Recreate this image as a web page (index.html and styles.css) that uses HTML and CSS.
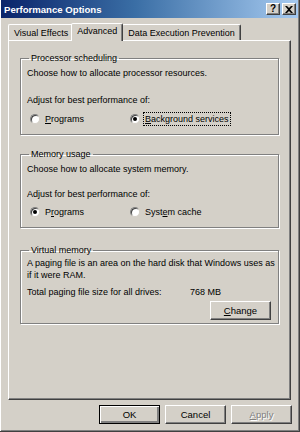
FILE: index.html
```html
<!DOCTYPE html>
<html lang="en">
<head>
  <meta charset="UTF-8">
  <title>Performance Options</title>
  <link rel="stylesheet" href="styles.css">
</head>
<body>

<div class="window">
  <div class="titlebar">
    <span class="title">Performance Options</span>
    <span class="caption-btns">
      <span class="cbtn">?</span>
      <span class="cbtn">
        <svg width="8" height="7" viewBox="0 0 8 7"><path d="M0 0h2l2 2 2-2h2L5 3.5 8 7H6L4 5 2 7H0l3-3.5z" fill="#000"/></svg>
      </span>
    </span>
  </div>

  <div class="tabs">
    <span class="tab">Visual Effects</span>
    <span class="tab active">Advanced</span>
    <span class="tab">Data Execution Prevention</span>
  </div>

  <div class="panel">
    <fieldset class="group group-cpu">
      <legend>Processor scheduling</legend>
      <p>Choose how to allocate processor resources.</p>
      <p class="adjust">Adjust for best performance of:</p>
      <div class="radios">
        <label class="radio"><span class="dot"></span><u>P</u>rograms</label>
        <label class="radio checked"><span class="dot"></span><span class="focus"><u>B</u>ackground services</span></label>
      </div>
    </fieldset>

    <fieldset class="group group-mem">
      <legend>Memory usage</legend>
      <p>Choose how to allocate system memory.</p>
      <p class="adjust">Adjust for best performance of:</p>
      <div class="radios">
        <label class="radio checked"><span class="dot"></span>P<u>r</u>ograms</label>
        <label class="radio"><span class="dot"></span>Syst<u>e</u>m cache</label>
      </div>
    </fieldset>

    <fieldset class="group group-vm">
      <legend>Virtual memory</legend>
      <p>A paging file is an area on the hard disk that Windows uses as if it were RAM.</p>
      <div class="total">
        <span class="total-label">Total paging file size for all drives:</span>
        <span>768 MB</span>
      </div>
      <div class="change-row">
        <button class="btn change"><u>C</u>hange</button>
      </div>
    </fieldset>
  </div>

  <div class="footer">
    <button class="btn default">OK</button>
    <button class="btn">Cancel</button>
    <button class="btn disabled"><u>A</u>pply</button>
  </div>
</div>

</body>
</html>
```

FILE: styles.css
```css
body {
  margin: 0;
  background: #d4d0c8;
  font-family: Tahoma, "Liberation Sans", Arial, sans-serif;
  font-size: 9px;
  color: #000;
}
.window {
  width: 300px;
  height: 432px;
  box-sizing: border-box;
  padding: 0 2px 2px 2px;
  border-right: 1px solid #404040;
  border-bottom: 1px solid #404040;
  box-shadow: inset 1px 0 0 #fff, inset -1px -1px 0 #808080;
  display: flex;
  flex-direction: column;
}
.titlebar {
  height: 18px;
  margin: 0 -1px;
  background: linear-gradient(to right, #0a246a, #3a6ea5 45%, #a6caf0);
  display: flex;
  align-items: center;
  justify-content: space-between;
  padding: 0 2px 0 3px;
}
.title {
  color: #fff;
  font-weight: bold;
  font-size: 9.6px;
}
.caption-btns {
  display: flex;
  gap: 2px;
}
.cbtn {
  width: 14px;
  height: 12px;
  box-sizing: border-box;
  background: #d4d0c8;
  border: 1px solid;
  border-color: #fff #404040 #404040 #fff;
  box-shadow: inset -1px -1px 0 #808080;
  display: flex;
  align-items: center;
  justify-content: center;
  font-weight: bold;
  font-size: 10px;
  line-height: 1;
}
.tabs {
  display: flex;
  align-items: flex-end;
  height: 18px;
  margin-top: 4px;
  padding-left: 6px;
}
.tab {
  height: 15px;
  padding: 0 5px;
  border: 1px solid;
  border-bottom: none;
  border-color: #fff #404040 transparent #fff;
  border-radius: 2px 2px 0 0;
  box-shadow: inset -1px 0 0 #808080;
  line-height: 16px;
  margin-right: -1px;
}
.tab.active {
  height: 17px;
  line-height: 15px;
  padding: 0 5px;
  margin: 0 -1px -1px -2px;
  position: relative;
  z-index: 1;
  background: #d4d0c8;
}
.panel {
  margin: 0 6px;
  height: 360px;
  box-sizing: border-box;
  border: 1px solid;
  border-color: #fff #404040 #404040 #fff;
  box-shadow: inset -1px -1px 0 #808080;
  padding: 12px 11px 0 11px;
  display: flex;
  flex-direction: column;
}
.group {
  margin: 0;
  padding: 4px 3px 0 6px;
  border: 1px solid #808080;
  box-shadow: 1px 1px 0 #fff, inset 1px 1px 0 #fff;
  box-sizing: border-box;
}
.group legend {
  padding: 0 2px;
  margin-left: 2px;
}
.group p {
  margin: 0;
  line-height: 12px;
}
.group-cpu { height: 82px; }
.group-mem { height: 79px; margin-top: 14px; }
.group-vm { height: 79px; margin-top: 17px; padding-top: 2px; }
.group .adjust {
  margin-top: 15px;
}
.group-mem .adjust {
  margin-top: 13px;
}
.group-mem .radios {
  margin-top: 7px;
}
.radios {
  display: flex;
  margin-top: 6px;
  padding-left: 3px;
}
.radio {
  display: flex;
  align-items: center;
  width: 100px;
  white-space: nowrap;
}
.dot {
  width: 10px;
  height: 10px;
  flex: none;
  box-sizing: border-box;
  border-radius: 50%;
  background: #fff;
  border: 1px solid;
  border-color: #808080 #d4d0c8 #d4d0c8 #808080;
  box-shadow: inset 1px 1px 0 #404040;
  margin-right: 5px;
  position: relative;
}
.radio.checked .dot::after {
  content: "";
  position: absolute;
  left: 2px;
  top: 2px;
  width: 4px;
  height: 4px;
  border-radius: 50%;
  background: #000;
}
.focus {
  border: 1px dotted #000;
  padding: 1px 1px;
  margin-left: -2px;
}
.total {
  display: flex;
  margin-top: 6px;
}
.total-label {
  width: 163px;
}
.change-row {
  display: flex;
  justify-content: flex-end;
  margin-top: 4px;
  padding-right: 4px;
}
.btn {
  font: inherit;
  font-size: 9.5px;
  color: #000;
  width: 61px;
  height: 19px;
  padding: 0;
  background: #d4d0c8;
  border: 1px solid;
  border-color: #fff #404040 #404040 #fff;
  box-shadow: inset -1px -1px 0 #808080;
}
.btn.default {
  border: 1px solid #000;
  box-shadow: inset 1px 1px 0 #fff, inset -2px -2px 0 #808080;
}
.btn.disabled {
  color: #808080;
  text-shadow: 1px 1px 0 #fff;
}
.footer {
  display: flex;
  justify-content: flex-end;
  gap: 5px;
  margin-top: 5px;
  padding-right: 5px;
}
```
